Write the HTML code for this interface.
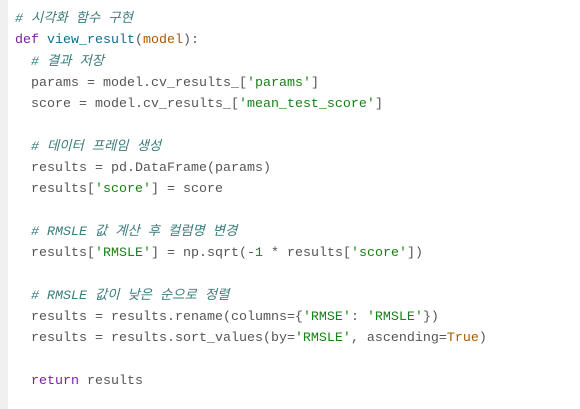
<!DOCTYPE html>
<html><head><meta charset="utf-8"><style>
html,body{margin:0;padding:0;width:580px;height:409px;background:#fff;overflow:hidden}
.g{position:absolute;left:0;top:0;width:8px;height:409px;background:#f0f0f0}
pre{position:absolute;left:15px;top:9px;margin:0;font-family:"Liberation Mono","Noto Sans CJK KR",monospace;font-size:13.33px;line-height:21.3px;color:#555}
.c{color:#3b7b7b;font-style:italic}
.k{color:#7b1fa2}
.f{color:#0d6e8f}
.s{color:#188018}
.o{color:#a85a00}
</style></head><body><div class="g"></div><pre><span class="c"># 시각화 함수 구현</span>
<span class="k">def</span> <span class="f">view_result</span>(<span class="o">model</span>):
  <span class="c"># 결과 저장</span>
  params = model.cv_results_[<span class="s">'params'</span>]
  score = model.cv_results_[<span class="s">'mean_test_score'</span>]

  <span class="c"># 데이터 프레임 생성</span>
  results = pd.DataFrame(params)
  results[<span class="s">'score'</span>] = score

  <span class="c"># RMSLE 값 계산 후 컬럼명 변경</span>
  results[<span class="s">'RMSLE'</span>] = np.sqrt(-<span class="s">1</span> * results[<span class="s">'score'</span>])

  <span class="c"># RMSLE 값이 낮은 순으로 정렬</span>
  results = results.rename(columns={<span class="s">'RMSE'</span>: <span class="s">'RMSLE'</span>})
  results = results.sort_values(by=<span class="s">'RMSLE'</span>, ascending=<span class="o">True</span>)

  <span class="k">return</span> results</pre></body></html>
